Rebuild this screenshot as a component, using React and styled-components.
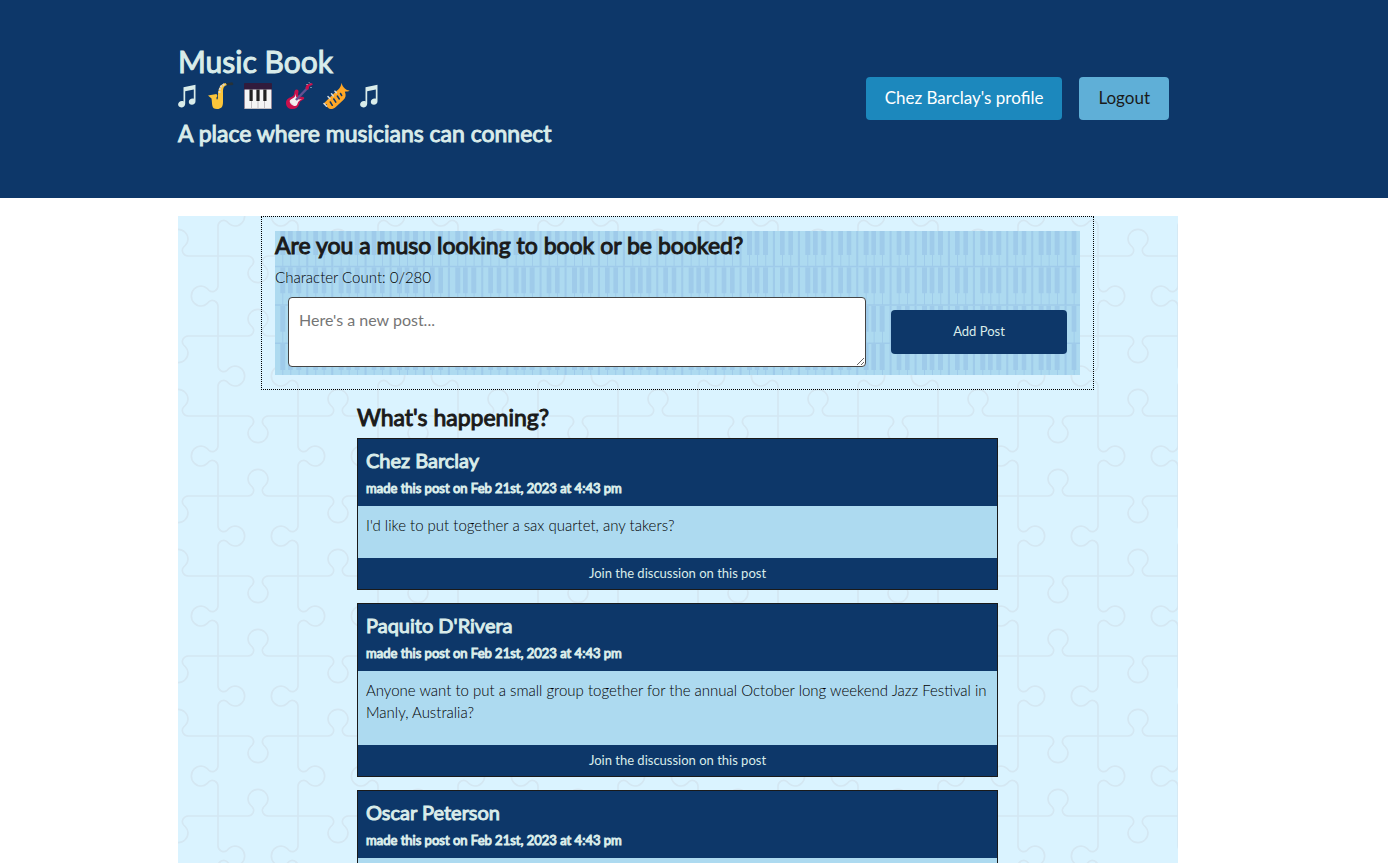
import React, { useState } from "react";
import styled, { createGlobalStyle } from "styled-components";

const navy = "#0d3769";
const ink = "#1a1a1a";
const pale = "#d9ecea";
const sky = "#addaf0";

const svgUrl = (svg) => `url("data:image/svg+xml,${encodeURIComponent(svg)}")`;

/* One edge of a jigsaw piece, running down from -48 to 48 with its tab to the right. */
const edge =
  "M0-48V-12a7 7 0 0 0 3.5 5.8l.9.4a5.9 5.9 0 0 0 6.4-1l2.4-2.3A11 11 0 0 1 20-12a12 12 0 0 1 0 24a11 11 0 0 1-6.8-2.9l-2.4-2.3a5.9 5.9 0 0 0-6.4-1l-.9.4A7 7 0 0 0 0 12V48";
const edges = [
  [144, 96, 0], [48, 96, 180], [48, 0, 0], [48, 192, 0], [144, 0, 180], [144, 192, 180],
  [96, 48, 90], [0, 48, -90], [192, 48, -90], [96, 144, -90], [0, 144, 90], [192, 144, 90],
];
const jigsaw = svgUrl(
  `<svg xmlns="http://www.w3.org/2000/svg" width="160" height="160" viewBox="0 0 192 192"><g fill="none" stroke="#d4e7f2" stroke-width="2">${edges
    .map(([x, y, r]) => `<path transform="translate(${x} ${y}) rotate(${r})" d="${edge}"/>`)
    .join("")}</g></svg>`
);

/* Piano keys: three octaves across and three rows down in each tile. */
const octave =
  "M5.3 0h5v26h-5zM13 0h4.7v26H13zM21.3 0h5v26h-5zM38.3 0H43v26h-4.7zM46.7 0h4.6v26h-4.6zM7.3 26h1v11h-1zM15.3 26h1v11h-1zM23.6 26h1v11h-1zM40.3 26h1v11h-1zM48.6 26h1v11h-1zM31.200 0h2.100v36.800h-2.100zM56.200 0h2.100v36.800h-2.100zM0 36.800h58.340v1.500H0z";
const keys = [0, 1, 2]
  .flatMap((r) => [0, 1, 2].map((c) => `<path transform="translate(${(c * 175) / 3} ${(r * 115) / 3})" d="${octave}"/>`))
  .join("");
const piano = svgUrl(
  `<svg xmlns="http://www.w3.org/2000/svg" width="175" height="115"><g fill="#9fcbea">${keys}</g></svg>`
);

const GlobalStyle = createGlobalStyle`
  *, *::before, *::after { box-sizing: border-box; }
  body { margin: 0; background: #fff; color: ${ink}; font: 300 15px/22px Lato, sans-serif; }
  h1, h2, h3, p { margin: 0; }
  button, textarea { font-family: inherit; }
`;

const Header = styled.header`
  background: ${navy};
  color: ${pale};
  padding: 46px 219px 47px 178px;
`;
const HeaderRow = styled.div`
  display: flex;
  align-items: center;
  justify-content: space-between;
`;
const Heading = styled.h2`
  font-weight: 400;
  font-size: ${(p) => p.$size}px;
  line-height: ${(p) => p.$line}px;
  -webkit-text-stroke: 1px currentColor;
`;
const Instruments = styled.div`
  display: flex;
  align-items: center;
  height: 38px;
`;
const Icon = styled.svg`
  display: block;
  width: ${(p) => p.$w}px;
  height: 28px;
  margin-right: ${(p) => p.$gap}px;
`;
const Nav = styled.nav`
  display: flex;
  gap: 17px;
`;
const NavLink = styled.a`
  background: ${(p) => (p.$light ? "#5fafd7" : "#1c88bd")};
  color: ${(p) => (p.$light ? ink : "#fff")};
  font-size: 17px;
  font-weight: 400;
  line-height: 23px;
  padding: 9px 19px 11px;
  border-radius: 4px;
  text-decoration: none;
`;
const Main = styled.main`
  margin: 18px 210px 0 178px;
  background: #daf3ff ${jigsaw};
`;
const FormFrame = styled.section`
  margin: 0 84px 0 83px;
  border: 1px dotted #000;
  padding: 14px 13px;
`;
const PostForm = styled.form`
  background: ${sky} ${piano} 0 -2px;
  padding-bottom: 8px;
`;
const Count = styled.p`
  color: #000;
  padding-top: 7px;
`;
const FormRow = styled.div`
  display: flex;
  align-items: center;
  gap: 25px;
  padding: 9px 13px 0;
`;
const PostInput = styled.textarea`
  display: block;
  flex: 1;
  min-width: 0;
  height: 70px;
  padding: 11px 10px;
  border: 1px solid #444;
  border-radius: 4px;
  background: #fff;
  color: ${ink};
  font-size: 16px;
  line-height: 22px;
  &::placeholder { color: #757575; }
`;
const AddButton = styled.button`
  width: 176px;
  height: 44px;
  padding: 0 0 2px;
  border: 0;
  border-radius: 4px;
  background: ${navy};
  color: ${pale};
  font-size: 13px;
`;
const Feed = styled.section`
  padding: 12px 180px 0 179px;
`;
const FeedTitle = styled(Heading)`
  margin-bottom: 6px;
`;
const Card = styled.article`
  border: 1px solid ${ink};
  background: ${navy};
  color: ${pale};
  margin-bottom: 13px;
`;
const CardHead = styled.header`
  padding: 7px 8px 5px;
`;
const CardBody = styled.p`
  background: ${sky};
  color: #000;
  min-height: 52px;
  padding: 8px 8px 22px;
`;
const CardLink = styled.a`
  display: block;
  color: ${pale};
  font-size: 13px;
  font-weight: 400;
  line-height: 31px;
  text-align: center;
  text-decoration: none;
`;

const Notes = ({ gap }) => (
  <Icon $w={18} $gap={gap} viewBox="0 0 18 28" aria-hidden="true">
    <path
      fill={pale}
      d="M5.5 5.2 17.500 2.800v16.400c0 2.100-1.700 3.500-3.600 3.500-1.900 0-3.100-1.100-3.100-2.700 0-1.900 1.700-3.400 3.800-3.400.5 0 .9.1 1.200.2V7.600L7.200 9.300v12.400c0 2.100-1.800 3.700-3.900 3.700-1.900 0-3.200-1.200-3.200-2.800 0-1.900 1.700-3.500 3.800-3.500.6 0 1.200.1 1.600.4z"
    />
  </Icon>
);
const Sax = () => (
  <Icon $w={26} $gap={10} viewBox="0 0 26 28" aria-hidden="true">
    <path fill="#fbc53a" d="M0 13.500 8.500 12 9.500 14 8.500 15.500c0 1 0 2 .5 2 .9 0 1-2 1-4.500C10.400 8 11 2.500 17.500 1L19 3c-3.500 1-4 3-4 8v9c0 5-2 7-6 7-6 0-4.500-5-5.500-10.500z" />
    <path fill="#263238" d="m18.500 1.200 5.700-.9 1.300 1.900-1.500 1-3.600-.1-1.300.6z" />
    <path fill="none" stroke="#dcd7cd" strokeWidth="2" strokeDasharray="2 1" d="M11.500 11V8l1.500-3.500L16.500 2" />
  </Icon>
);
const Keyboard = () => (
  <Icon $w={28} $gap={14} viewBox="0 0 28 28" aria-hidden="true">
    <rect y="1" width="28" height="26" rx="1" fill="#311b3c" />
    <path fill="#f5f5f5" d="M.5 7.500h27V26.500H.5z" />
    <path fill="none" stroke="#c3bfc3" d="M7.500 18v8M14 7.500V26M20.500 18v8M.5 26.500h27" />
    <path fill="#212121" d="M5.500 7.500h3.200V19H5.500zM12.400 7.500h3.200V19h-3.200zM19.300 7.500h3.200V19h-3.200z" />
  </Icon>
);
const Guitar = () => (
  <Icon $w={27} $gap={10} viewBox="0 0 27 28" aria-hidden="true">
    <path fill="#c9104c" d="M10.600 7.500c1.700.2 2.400 1.500 1.600 3.700-.5 1.500.3 2.600 1.600 3.200 1.500.6 3.300-.1 4.300 1.200.6 1-.5 2.200-2 2.700-2 .7-2.300 2.200-3 4.200-1.200 3.200-3.700 4.500-6.300 4.500C2.500 27 0 24.600 0 20.900c0-3.300 2.500-5 5.300-5.900 2.300-.8 2.800-2.300 3-4.300.1-1.900.8-3.200 2.300-3.200z" />
    <path fill="#f3eeee" d="m9.800 11.500.3 3.500 2.500 2.500 3.500-.2c-2.500.9-4 2.300-4.700 4.800-.4 1.500-1.500 2.200-3 1.800-2.700-.7-4.300-2.300-4.700-4.200-.3-1.700 1.500-2.700 3.200-3.500 1.800-.8 2.700-2.200 2.900-4.700z" />
    <path stroke="#655091" strokeWidth="2.500" d="m10 18 11.500-12" />
    <path fill="#c9104c" d="M19.300 5.800 21 2.400l5-1.400.8 1.800-3.500 1.400-.8 3.200-2 .4z" />
    <path stroke="#ddd" d="m20.500 2 1 1M23 .4l1 1M24.500 5l1 1M4 20l3.500 3" />
  </Icon>
);
const Trumpet = () => (
  <Icon $w={27} $gap={10} viewBox="0 0 27 28" aria-hidden="true">
    <path fill="#ffa726" d="M18.500.8c.6 2.300 1.600 4.300 3.300 5.800 1.300 1.200 2.700 1.900 4.900 2.100-1.500.8-3.400.8-4.900 1 1.500 3 1 6-1.500 8.300l-7 6.500c-3.200 3-6.500 3.300-8.300 1.300-1.200-1.200-1.400-2.400-1-3.800L1.500 23 .4 21.800 13.500 9c3.800-2.500 4.500-5 5-8.200z" />
    <path fill="none" stroke="#0d3769" strokeWidth="1.500" strokeLinecap="round" d="m7.300 20 2 3.300M10.800 17l2 3.200M14.300 14l2 3M17.500 11.500l1.200 2" />
    <path fill="none" stroke="#cfd8dc" strokeWidth="1.500" strokeLinecap="round" d="m5 14.500 2 2.300M8.500 11.800l1.800 2.100M12 9.200l1.300 1.600M1 21.500l2.500 2.800" />
  </Icon>
);

const posts = [
  { author: "Chez Barclay", text: "I'd like to put together a sax quartet, any takers?" },
  {
    author: "Paquito D'Rivera",
    text: "Anyone want to put a small group together for the annual October long weekend Jazz Festival in Manly, Australia?",
  },
  { author: "Oscar Peterson", text: "" },
];

const Post = ({ author, text }) => (
  <Card>
    <CardHead>
      <Heading as="h3" $size={20} $line={29}>{author}</Heading>
      <Heading as="p" $size={13} $line={26}>made this post on Feb 21st, 2023 at 4:43 pm</Heading>
    </CardHead>
    <CardBody>{text}</CardBody>
    {text && <CardLink href="#discussion">Join the discussion on this post</CardLink>}
  </Card>
);

export default function App() {
  const [draft, setDraft] = useState("");
  return (
    <>
      <GlobalStyle />
      <Header>
        <HeaderRow>
          <div>
            <Heading as="h1" $size={30} $line={31}>Music Book</Heading>
            <Instruments>
              <Notes gap={12} />
              <Sax />
              <Keyboard />
              <Guitar />
              <Trumpet />
              <Notes gap={0} />
            </Instruments>
            <Heading $size={23} $line={36}>A place where musicians can connect</Heading>
          </div>
          <Nav>
            <NavLink href="#profile">Chez Barclay's profile</NavLink>
            <NavLink href="#logout" $light>Logout</NavLink>
          </Nav>
        </HeaderRow>
      </Header>
      <Main>
        <FormFrame>
          <PostForm onSubmit={(e) => e.preventDefault()}>
            <Heading $size={23} $line={28}>Are you a muso looking to book or be booked?</Heading>
            <Count>Character Count: {draft.length}/280</Count>
            <FormRow>
              <PostInput
                aria-label="New post"
                placeholder="Here's a new post..."
                maxLength={280}
                value={draft}
                onChange={(e) => setDraft(e.target.value)}
              />
              <AddButton type="submit">Add Post</AddButton>
            </FormRow>
          </PostForm>
        </FormFrame>
        <Feed>
          <FeedTitle $size={23} $line={30}>What's happening?</FeedTitle>
          {posts.map((post) => (
            <Post key={post.author} {...post} />
          ))}
        </Feed>
      </Main>
    </>
  );
}
